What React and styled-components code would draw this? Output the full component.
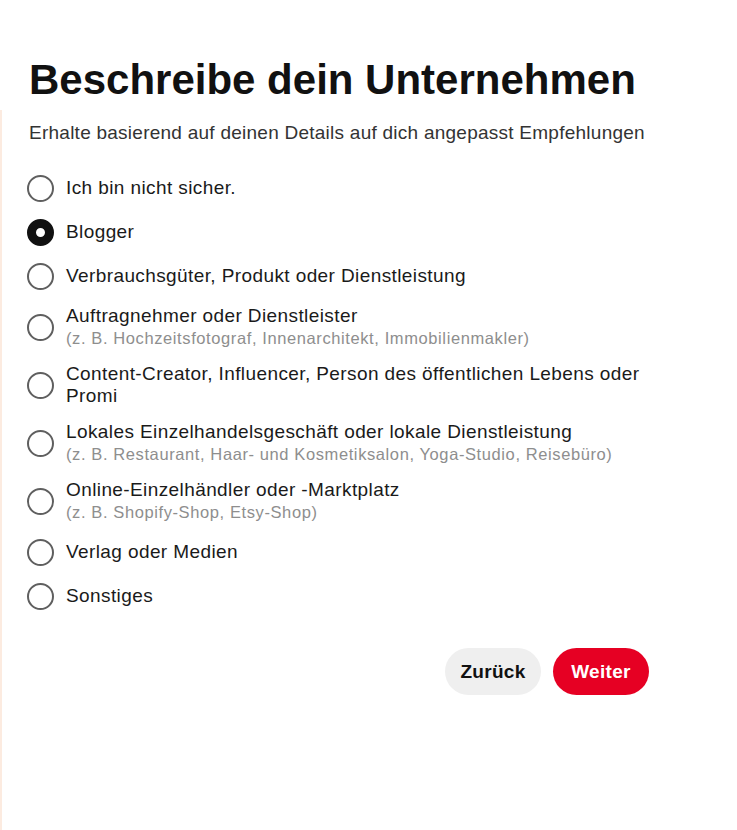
import React, { useState } from 'react';
import styled, { createGlobalStyle } from 'styled-components';

const GlobalStyle = createGlobalStyle`
    body {
        margin: 0;
        background: #ffffff;
        font-family: "Liberation Sans", Arial, Helvetica, sans-serif;
        color: #111111;
    }
`;

const Page = styled.div`
    display: flex;
    min-height: 830px;
    background: #ffffff;
`;

const EdgeStrip = styled.div`
    width: 2px;
    margin-top: 110px;
    background: #fcebe0;
`;

const Panel = styled.div`
    display: flex;
    flex-direction: column;
    width: 622px;
    padding: 55px 0 0 25px;
`;

const Title = styled.h1`
    margin: 0 0 0 2px;
    font-size: 42px;
    line-height: 50px;
    font-weight: 700;
    color: #111111;
`;

const Subtitle = styled.p`
    margin: 16px 0 21px 2px;
    font-size: 19px;
    line-height: 24px;
    letter-spacing: 0.25px;
    color: #333333;
`;

const OptionList = styled.div`
    display: flex;
    flex-direction: column;
`;

const Option = styled.label`
    display: flex;
    align-items: center;
    gap: 12px;
    min-height: 44px;
    padding: 7px 0;
    box-sizing: border-box;
    cursor: pointer;
`;

const Radio = styled.span`
    flex: none;
    width: 27px;
    height: 27px;
    box-sizing: border-box;
    border-radius: 50%;
    border: ${(p) => (p.checked ? '9px solid #111111' : '2px solid #5f5f5f')};
    background: #ffffff;
`;

const LabelText = styled.div`
    display: flex;
    flex-direction: column;
`;

const Main = styled.span`
    font-size: 19px;
    line-height: 22px;
    letter-spacing: 0.4px;
    color: #1a1a1a;
`;

const Hint = styled.span`
    font-size: 16.5px;
    line-height: 22px;
    letter-spacing: 0.6px;
    color: #8e8e8e;
`;

const Actions = styled.div`
    display: flex;
    justify-content: flex-end;
    gap: 12px;
    margin-top: 30px;
`;

const Button = styled.button`
    height: 47px;
    min-width: 96px;
    padding: 0 15px;
    border: none;
    border-radius: 24px;
    font-family: inherit;
    font-size: 19px;
    font-weight: 700;
    letter-spacing: 0.3px;
    background: ${(p) => (p.primary ? '#e60023' : '#efefef')};
    color: ${(p) => (p.primary ? '#ffffff' : '#111111')};
    cursor: pointer;
`;

const options = [
    { label: 'Ich bin nicht sicher.' },
    { label: 'Blogger' },
    { label: 'Verbrauchsgüter, Produkt oder Dienstleistung' },
    { label: 'Auftragnehmer oder Dienstleister', hint: '(z. B. Hochzeitsfotograf, Innenarchitekt, Immobilienmakler)' },
    { label: 'Content-Creator, Influencer, Person des öffentlichen Lebens oder Promi' },
    { label: 'Lokales Einzelhandelsgeschäft oder lokale Dienstleistung', hint: '(z. B. Restaurant, Haar- und Kosmetiksalon, Yoga-Studio, Reisebüro)' },
    { label: 'Online-Einzelhändler oder -Marktplatz', hint: '(z. B. Shopify-Shop, Etsy-Shop)' },
    { label: 'Verlag oder Medien' },
    { label: 'Sonstiges' },
];

const App = () => {
    const [selected, setSelected] = useState(1);

    return (
        <>
            <GlobalStyle />
            <Page>
                <EdgeStrip />
                <Panel>
                    <Title>Beschreibe dein Unternehmen</Title>
                    <Subtitle>Erhalte basierend auf deinen Details auf dich angepasst Empfehlungen</Subtitle>
                    <OptionList>
                        {options.map((opt, i) => (
                            <Option key={opt.label} onClick={() => setSelected(i)}>
                                <Radio checked={selected === i} />
                                <LabelText>
                                    <Main>{opt.label}</Main>
                                    {opt.hint && <Hint>{opt.hint}</Hint>}
                                </LabelText>
                            </Option>
                        ))}
                    </OptionList>
                    <Actions>
                        <Button>Zurück</Button>
                        <Button primary>Weiter</Button>
                    </Actions>
                </Panel>
            </Page>
        </>
    );
};

export default App;
